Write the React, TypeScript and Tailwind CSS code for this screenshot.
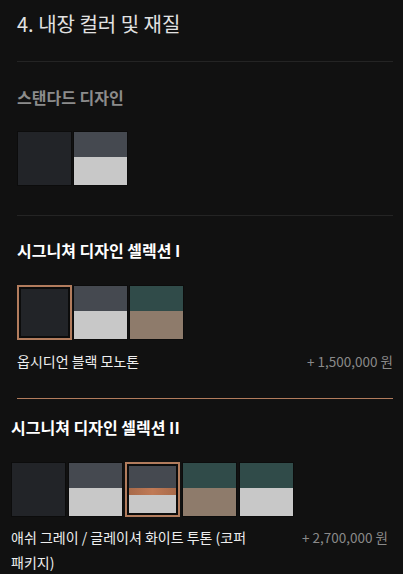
import React from "react";

type Swatch = { top: string; bottom?: string; stripe?: boolean; selected?: boolean };

const FONT = { fontFamily: '"Noto Sans CJK KR", "Noto Sans", sans-serif' };

function Chip({ top, bottom, stripe, selected }: Swatch) {
  const fill = (
    <div className="flex flex-col w-full h-full">
      <div className="flex-1" style={{ backgroundColor: top }} />
      {stripe && <div className="h-[7px] bg-gradient-to-r from-[#a86a4a] via-[#c07a56] to-[#a86a4a]" />}
      {bottom && <div className={stripe ? "h-[18px]" : "h-[28px]"} style={{ backgroundColor: bottom }} />}
    </div>
  );
  if (selected) {
    return (
      <div className="w-[55px] h-[55px] border-2 border-[#b27c5d] bg-[#0c0c0c] p-[2px] shrink-0">
        {fill}
      </div>
    );
  }
  return <div className="w-[55px] h-[55px] shrink-0 border border-black/25">{fill}</div>;
}

const DARK = "#222428";
const GRAY = "#454950";
const LIGHT = "#c8c8c8";
const GREEN = "#304b49";
const TAN = "#8e7b6b";

export default function App() {
  return (
    <div className="min-h-[574px] w-full bg-[#111111] pl-[17px] pr-[10px]" style={FONT}>
      <h2 className="pt-[10px] text-[20px] leading-[28px] text-[#e2e2e2]">4. 내장 컬러 및 재질</h2>
      <div className="mt-[23px] h-px bg-[#242424]" />

      {/* standard */}
      <h3 className="mt-[25px] text-[16px] leading-[20px] font-bold text-[#8c8c8c]">스탠다드 디자인</h3>
      <div className="mt-[24px] flex gap-px">
        <Chip top={DARK} />
        <Chip top={GRAY} bottom={LIGHT} />
      </div>
      <div className="mt-[29px] h-px bg-[#242424]" />

      {/* signature I */}
      <h3 className="mt-[24px] text-[16px] leading-[20px] font-bold text-white">시그니쳐 디자인 셀렉션 I</h3>
      <div className="mt-[25px] flex gap-px">
        <Chip top={DARK} selected />
        <Chip top={GRAY} bottom={LIGHT} />
        <Chip top={GREEN} bottom={TAN} />
      </div>
      <div className="mt-[11px] flex justify-between items-center leading-[20px]">
        <span className="text-[14px] text-[#eeeeee]">옵시디언 블랙 모노톤</span>
        <span className="text-[13.5px] text-[#8a8a8a]">+ 1,500,000 원</span>
      </div>
      <div className="mt-[27px] h-px bg-[#b27c5d]" />

      {/* signature II */}
      <div className="-ml-[6px] mr-[5px]">
        <h3 className="mt-[18px] text-[16px] leading-[20px] font-bold text-white">시그니쳐 디자인 셀렉션 II</h3>
        <div className="mt-[25px] flex gap-[2px]">
          <Chip top={DARK} />
          <Chip top={GRAY} bottom={LIGHT} />
          <Chip top={GRAY} bottom={LIGHT} stripe selected />
          <Chip top={GREEN} bottom={TAN} />
          <Chip top={GREEN} bottom={LIGHT} />
        </div>
        <div className="mt-[8px] flex justify-between leading-[25px]">
          <span className="max-w-[255px] break-keep text-[14px] text-[#eeeeee]">
            애쉬 그레이 / 글레이셔 화이트 투톤 (코퍼 패키지)
          </span>
          <span className="text-[13.5px] text-[#8a8a8a] shrink-0">+ 2,700,000 원</span>
        </div>
      </div>
    </div>
  );
}
